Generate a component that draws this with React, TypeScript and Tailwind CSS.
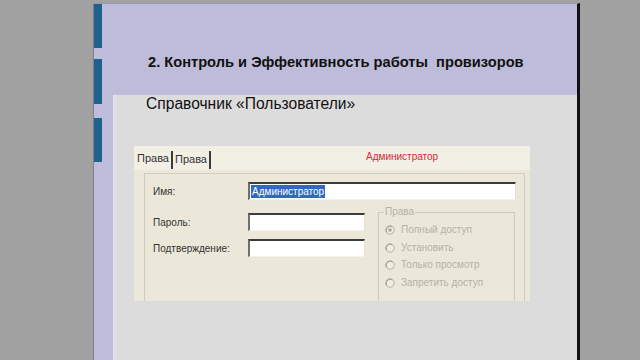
import React from "react";

const ff = { fontFamily: '"Liberation Sans", Arial, sans-serif' };

function Radio({ checked, label }: { checked?: boolean; label: string }) {
  return (
    <div className="flex items-center h-[17.7px]">
      <svg width="10" height="10" viewBox="0 0 10 10" className="mr-[6px]">
        <circle cx="5" cy="5" r="4.2" fill="#efece0" stroke="#b5b2a5" strokeWidth="1" />
        <path d="M1.5 7 A4.2 4.2 0 0 1 7 1.5" fill="none" stroke="#9c9a8e" strokeWidth="1" />
        {checked && <circle cx="5" cy="5" r="1.8" fill="#a8a69a" />}
      </svg>
      <span className="text-[10px] text-[#b4b2a4] leading-none">{label}</span>
    </div>
  );
}

function Field({ w, children }: { w: string; children?: React.ReactNode }) {
  return (
    <div
      className={`${w} h-[18px] bg-white border-t-2 border-l-2 border-t-[#3c3c3c] border-l-[#6e6e6e] border-b border-r border-b-[#f4f2ea] border-r-[#e4e1d4] flex items-center pl-[1px]`}
    >
      {children}
    </div>
  );
}

export default function App() {
  return (
    <div className="w-[640px] h-[360px] bg-[#a1a1a1] overflow-hidden pl-[93px] pt-[3px]" style={ff}>
      <div className="w-[487px] h-[357px] flex bg-[#bdbcda] border-l border-t border-l-[#7e7e8c] border-t-[#9a9aa8] border-r-[3px] border-r-[#111]">
        <div className="w-[19px] flex flex-col pt-[0px]">
          <div className="w-[8px] h-[44px] bg-[#1e618d]" />
          <div className="w-[8px] h-[45px] bg-[#1e618d] mt-[11px]" />
          <div className="w-[8px] h-[44px] bg-[#1e618d] mt-[14px]" />
        </div>
        <div className="flex-1 flex flex-col">
          <div className="h-[91px] pl-[35px] pt-[49px]">
            <div className="text-[14.65px] font-bold text-[#111] leading-[18px] whitespace-pre">
              2. Контроль и Эффективность работы  провизоров
            </div>
          </div>
          <div className="flex-1 bg-[#dcdcdc] border-l-[3px] border-l-[#e2e2e4] pl-[30px] pt-[0px]">
            <div className="text-[15.6px] text-[#111] leading-[18px] pt-[0px]">Справочник «Пользователи»</div>
            <div className="ml-[-12px] mt-[33px] w-[396px] h-[155px] bg-[#ebe8d9] flex flex-col overflow-hidden">
              <div className="h-[24px] shrink-0 bg-[#f2f0e5] flex items-start pt-[5px] pl-[3px] relative">
                <span className="text-[11px] text-[#333] leading-[15px] pr-[2px]">Права</span>
                <span className="w-[2px] h-[18px] bg-[#3a3a3a]" />
                <span className="text-[11px] text-[#333] leading-[16px] pl-[2px] pr-[2px]">Права</span>
                <span className="w-[2px] h-[18px] bg-[#3a3a3a]" />
                <span className="absolute left-[232px] top-[4px] text-[10px] text-[#d02a3c] leading-[14px]">
                  Администратор
                </span>
              </div>
              <div className="flex-1 pl-[10px] pr-[5px] pt-[3px] min-h-0">
                <div className="h-[200px] border-l border-t border-r border-[#cfccbb] pl-[8px] pt-[8px] flex flex-col">
                  <div className="flex items-center">
                    <span className="w-[95px] text-[10px] text-[#333]">Имя:</span>
                    <Field w="w-[268px]">
                      <span className="text-[10px] leading-[13px] bg-[#3168c6] text-white px-[1px]">Администратор</span>
                    </Field>
                  </div>
                  <div className="flex mt-[13px]">
                    <div className="flex flex-col gap-[8px]">
                      <div className="flex items-center">
                        <span className="w-[95px] text-[10px] text-[#333]">Пароль:</span>
                        <Field w="w-[117px]" />
                      </div>
                      <div className="flex items-center">
                        <span className="w-[95px] text-[10px] text-[#333]">Подтверждение:</span>
                        <Field w="w-[117px]" />
                      </div>
                    </div>
                    <div className="ml-[13px] w-[137px] h-[120px] mt-[-1px] border-l border-t border-r border-[#cfccbb] relative pl-[6px] pt-[8px]">
                      <span className="absolute left-[5px] top-[-7px] bg-[#ebe8d9] px-[1px] text-[10px] leading-[12px] text-[#b4b2a4]">
                        Права
                      </span>
                      <Radio checked label="Полный доступ" />
                      <Radio label="Установить" />
                      <Radio label="Только просмотр" />
                      <Radio label="Запретить доступ" />
                    </div>
                  </div>
                </div>
              </div>
            </div>
          </div>
        </div>
      </div>
    </div>
  );
}
